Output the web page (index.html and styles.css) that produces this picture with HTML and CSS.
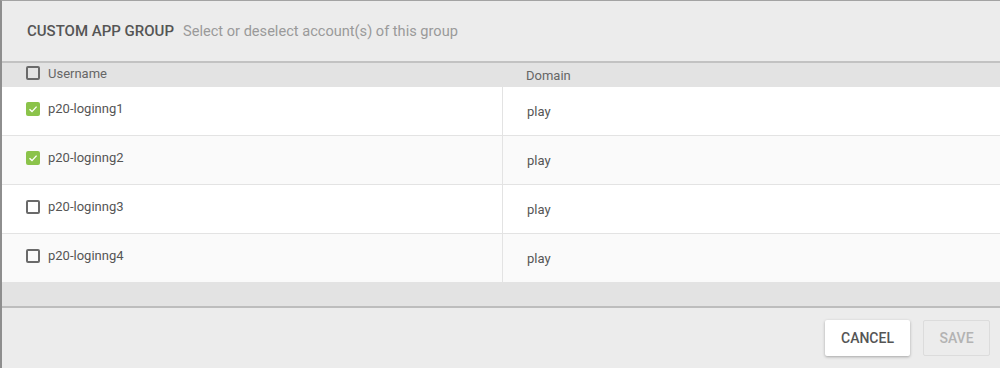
FILE: index.html
```html
<!DOCTYPE html>
<html lang="en">
<head>
    <meta charset="UTF-8">
    <title>Custom App Group</title>
    <link rel="stylesheet" href="styles.css">
</head>
<body>

    <div class="dialog">
        <!-- Title -->
        <div class="dialog-header">
            <span class="title">CUSTOM APP GROUP</span>
            <span class="subtitle">Select or deselect account(s) of this group</span>
        </div>

        <!-- Accounts -->
        <div class="accounts">
            <div class="row head">
                <div class="cell user">
                    <span class="box"></span>
                    <span>Username</span>
                </div>
                <div class="cell domain">Domain</div>
            </div>
            <div class="row">
                <div class="cell user">
                    <span class="box checked">
                        <svg viewBox="0 0 14 14" width="14" height="14"><path d="M3.5 7.2 L6 9.6 L10.6 4.6" fill="none" stroke="#fff" stroke-width="1.4"/></svg>
                    </span>
                    <span>p20-loginng1</span>
                </div>
                <div class="cell domain">play</div>
            </div>
            <div class="row">
                <div class="cell user">
                    <span class="box checked">
                        <svg viewBox="0 0 14 14" width="14" height="14"><path d="M3.5 7.2 L6 9.6 L10.6 4.6" fill="none" stroke="#fff" stroke-width="1.4"/></svg>
                    </span>
                    <span>p20-loginng2</span>
                </div>
                <div class="cell domain">play</div>
            </div>
            <div class="row">
                <div class="cell user">
                    <span class="box"></span>
                    <span>p20-loginng3</span>
                </div>
                <div class="cell domain">play</div>
            </div>
            <div class="row">
                <div class="cell user">
                    <span class="box"></span>
                    <span>p20-loginng4</span>
                </div>
                <div class="cell domain">play</div>
            </div>
        </div>

        <div class="spacer"></div>

        <!-- Actions -->
        <div class="dialog-footer">
            <button class="btn cancel">CANCEL</button>
            <button class="btn save" disabled>SAVE</button>
        </div>
    </div>

</body>
</html>
```

FILE: styles.css
```css
body {
    margin: 0;
    font-family: Roboto, "Liberation Sans", Arial, sans-serif;
    background-color: #ececec;
}

.dialog {
    height: 367px;
    border-top: 1px solid #a3a3a3;
    border-left: 2px solid #8e8e8e;
    display: flex;
    flex-direction: column;
    background-color: #ececec;
}

.dialog-header {
    height: 60px;
    padding-left: 25px;
    display: flex;
    align-items: center;
    border-bottom: 2px solid #c2c2c2;
    font-size: 15px;
}

.title {
    font-weight: 500;
    color: #555;
    margin-right: 9px;
}

.subtitle {
    color: #9a9a9a;
    font-size: 14.6px;
}

.accounts {
    display: flex;
    flex-direction: column;
}

.row {
    display: grid;
    grid-template-columns: 500px 1fr;
    height: 48px;
    background-color: #fff;
    border-bottom: 1px solid #e3e3e3;
    font-size: 13px;
    color: #555;
}

.row:nth-child(odd) {
    background-color: #fafafa;
}

.row:last-child {
    border-bottom: none;
}

.row.head {
    height: 24px;
    background-color: #e3e3e3;
    border-bottom: none;
    color: #666;
}

.cell {
    display: flex;
    align-items: center;
    padding-left: 24px;
}

.row .user {
    padding-bottom: 5px;
}

.row .domain {
    border-left: 1px solid #e3e3e3;
    padding-top: 1px;
}

.row.head .user {
    padding-bottom: 4px;
}

.row.head .domain {
    border-left: none;
    padding-top: 1px;
}

.box {
    width: 10px;
    height: 10px;
    border: 2px solid #6a6a6a;
    border-radius: 2px;
    margin-right: 8px;
    display: flex;
    align-items: center;
    justify-content: center;
}

.box.checked {
    width: 14px;
    height: 14px;
    border: none;
    background-color: #8bc34a;
}

.spacer {
    height: 24px;
    background-color: #e3e3e3;
    border-bottom: 2px solid #bdbdbd;
}

.dialog-footer {
    flex: 1;
    display: flex;
    justify-content: flex-end;
    align-items: flex-start;
    padding: 12px 10px 0 0;
    gap: 13px;
}

.btn {
    height: 36px;
    font-family: inherit;
    font-size: 14px;
    font-weight: 500;
    border-radius: 2px;
    cursor: pointer;
}

.cancel {
    width: 85px;
    background-color: #fff;
    color: #555;
    border: none;
    box-shadow: 0 1px 3px rgba(0, 0, 0, 0.3);
}

.save {
    width: 67px;
    background-color: #ececec;
    color: #b3b3b3;
    border: 1px solid #dcdcdc;
}
```
